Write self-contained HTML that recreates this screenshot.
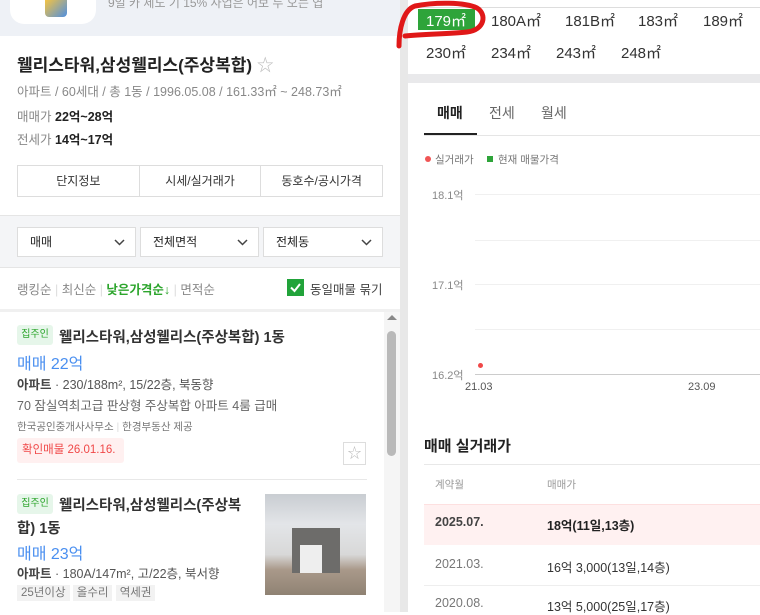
<!DOCTYPE html>
<html><head><meta charset="utf-8"><style>
*{margin:0;padding:0;box-sizing:border-box}
body{width:760px;height:612px;overflow:hidden;background:#fff;font-family:"Liberation Sans","Noto Sans CJK KR",sans-serif;color:#222;position:relative}
.a{position:absolute;white-space:nowrap}
.g{color:#888}
.sel svg{position:absolute;right:10px;top:11px}
</style></head><body>
<div class="a" style="left:0;top:0;width:400px;height:36px;background:#eef1f6"></div>
<div class="a" style="left:10px;top:0;width:86px;height:24px;background:#fff;border-radius:0 0 14px 14px"></div>
<div class="a" style="left:45px;top:0;width:22px;height:17px;background:linear-gradient(135deg,#f4c343,#4f8fe0);border-radius:0 0 4px 4px"></div>
<div class="a" style="left:108px;top:-6px;font-size:12px;color:#999">9일 카 제도 기 15% 사업은 어보 두 오는 엽</div>
<div class="a" style="left:17px;top:51px;font-size:17px;font-weight:bold;color:#222">웰리스타워,삼성웰리스(주상복합) <span style="color:#bbb;font-weight:normal">☆</span></div>
<div class="a g" style="left:17px;top:81px;font-size:12.5px">아파트 / 60세대 / 총 1동 / 1996.05.08 / 161.33㎡ ~ 248.73㎡</div>
<div class="a" style="left:17px;top:106px;font-size:12.5px"><span class="g">매매가</span> <b>22억~28억</b></div>
<div class="a" style="left:17px;top:129px;font-size:12.5px"><span class="g">전세가</span> <b>14억~17억</b></div>
<div class="a" style="left:17px;top:165px;width:366px;height:32px;border:1px solid #ddd;display:flex;font-size:12px;color:#333">
<div style="flex:1;text-align:center;line-height:30px;border-right:1px solid #ddd">단지정보</div>
<div style="flex:1;text-align:center;line-height:30px;border-right:1px solid #ddd">시세/실거래가</div>
<div style="flex:1;text-align:center;line-height:30px">동호수/공시가격</div></div>
<div class="a" style="left:0;top:215px;width:400px;height:53px;background:#f4f5f7;border-top:1px solid #e5e5e5;border-bottom:1px solid #e5e5e5"></div>
<div class="a sel" style="left:17px;top:227px;width:119px;height:30px;background:#fff;border:1px solid #ddd;font-size:12px;line-height:28px;padding-left:12px">매매<svg width="11" height="7"><path d="M1 1L5.5 5.5L10 1" fill="none" stroke="#444" stroke-width="1.5"/></svg></div>
<div class="a sel" style="left:140px;top:227px;width:119px;height:30px;background:#fff;border:1px solid #ddd;font-size:12px;line-height:28px;padding-left:12px">전체면적<svg width="11" height="7"><path d="M1 1L5.5 5.5L10 1" fill="none" stroke="#444" stroke-width="1.5"/></svg></div>
<div class="a sel" style="left:263px;top:227px;width:120px;height:30px;background:#fff;border:1px solid #ddd;font-size:12px;line-height:28px;padding-left:12px">전체동<svg width="11" height="7"><path d="M1 1L5.5 5.5L10 1" fill="none" stroke="#444" stroke-width="1.5"/></svg></div>
<div class="a" style="left:17px;top:279px;font-size:12.5px;color:#888">랭킹순 <span style="color:#ddd">|</span> 최신순 <span style="color:#ddd">|</span> <span style="color:#2ca52c;font-weight:bold">낮은가격순↓</span> <span style="color:#ddd">|</span> 면적순</div>
<div class="a" style="left:287px;top:279px;width:17px;height:17px;background:#21a33a"><svg width="17" height="17" style="position:absolute;left:0;top:0"><path d="M4 8.5L7.5 12L13 5" fill="none" stroke="#fff" stroke-width="2"/></svg></div>
<div class="a" style="left:310px;top:279px;font-size:12.5px;color:#444">동일매물 묶기</div>
<div class="a" style="left:0;top:309px;width:400px;height:3px;background:#f0f0f0"></div>
<div class="a" style="left:17px;top:325px;width:36px;height:20px;background:#e6f6ea;color:#2ca52c;font-size:10px;line-height:20px;text-align:center;border-radius:3px">집주인</div>
<div class="a" style="left:59px;top:326px;font-size:14.5px;font-weight:bold;color:#333">웰리스타워,삼성웰리스(주상복합) 1동</div>
<div class="a" style="left:17px;top:350px;font-size:16px;color:#4a8ff0">매매 22억</div>
<div class="a" style="left:17px;top:374px;font-size:12.5px;color:#555"><b style="color:#444">아파트</b> · 230/188m², 15/22층, 북동향</div>
<div class="a" style="left:17px;top:395px;font-size:12.5px;color:#666">70 잠실역최고급 판상형 주상복합 아파트 4룸 급매</div>
<div class="a" style="left:17px;top:419px;font-size:10.5px;color:#777">한국공인중개사사무소 <span style="color:#ddd">|</span> 한경부동산 제공</div>
<div class="a" style="left:17px;top:438px;width:107px;height:25px;background:#fff0f0;color:#f04848;font-size:11.5px;line-height:25px;padding-left:5px;border-radius:3px">확인매물 26.01.16.</div>
<div class="a" style="left:343px;top:442px;width:23px;height:23px;border:1px solid #ddd;color:#bbb;font-size:14px;text-align:center;line-height:21px">☆</div>
<div class="a" style="left:17px;top:479px;width:350px;height:1px;background:#e8e8e8"></div>
<div class="a" style="left:17px;top:494px;width:36px;height:20px;background:#e6f6ea;color:#2ca52c;font-size:10px;line-height:20px;text-align:center;border-radius:3px">집주인</div>
<div class="a" style="left:59px;top:494px;font-size:14.5px;font-weight:bold;color:#333">웰리스타워,삼성웰리스(주상복</div>
<div class="a" style="left:17px;top:517px;font-size:14.5px;font-weight:bold;color:#333">합) 1동</div>
<div class="a" style="left:17px;top:540px;font-size:16px;color:#4a8ff0">매매 23억</div>
<div class="a" style="left:17px;top:563px;font-size:12.5px;color:#555"><b style="color:#444">아파트</b> · 180A/147m², 고/22층, 북서향</div>
<div class="a" style="left:17px;top:584px;font-size:11.5px;color:#777"><span style="background:#f2f2f2;padding:2px 4px">25년이상</span> <span style="background:#f2f2f2;padding:2px 4px">올수리</span> <span style="background:#f2f2f2;padding:2px 4px">역세권</span></div>
<div class="a" style="left:265px;top:494px;width:101px;height:101px;background:linear-gradient(180deg,#c9cdd2 0%,#e3e5e8 30%,#d8d8d8 60%,#a9998a 75%,#8f8273 100%)"></div>
<div class="a" style="left:292px;top:528px;width:48px;height:45px;background:#6d6c6a"></div>
<div class="a" style="left:300px;top:545px;width:22px;height:28px;background:#eee"></div>
<div class="a" style="left:384px;top:312px;width:16px;height:300px;background:#f5f5f5"></div>
<div class="a" style="left:387px;top:331px;width:9px;height:125px;background:#b9b9b9;border-radius:5px"></div>
<div class="a" style="left:387px;top:315px;width:0;height:0;border-left:5px solid transparent;border-right:5px solid transparent;border-bottom:5px solid #888"></div>
<div class="a" style="left:400px;top:0;width:8px;height:612px;background:#e8e8e8"></div>
<div class="a" style="left:408px;top:7px;width:352px;height:1px;background:#ddd"></div>
<div class="a" style="left:418px;top:9px;width:57px;height:21px;background:#2ea43a"></div>
<div class="a" style="left:426px;top:10px;font-size:15px;color:#fff">179㎡</div>
<div class="a" style="left:491px;top:10px;font-size:15px;color:#333">180A㎡</div>
<div class="a" style="left:565px;top:10px;font-size:15px;color:#333">181B㎡</div>
<div class="a" style="left:638px;top:10px;font-size:15px;color:#333">183㎡</div>
<div class="a" style="left:703px;top:10px;font-size:15px;color:#333">189㎡</div>
<div class="a" style="left:426px;top:42px;font-size:15px;color:#333">230㎡</div>
<div class="a" style="left:491px;top:42px;font-size:15px;color:#333">234㎡</div>
<div class="a" style="left:556px;top:42px;font-size:15px;color:#333">243㎡</div>
<div class="a" style="left:621px;top:42px;font-size:15px;color:#333">248㎡</div>
<div class="a" style="left:408px;top:74px;width:352px;height:9px;background:#e9e9eb"></div>
<div class="a" style="left:437px;top:103px;font-size:14px;font-weight:bold;color:#222">매매</div>
<div class="a" style="left:489px;top:103px;font-size:14px;color:#666">전세</div>
<div class="a" style="left:541px;top:103px;font-size:14px;color:#666">월세</div>
<div class="a" style="left:424px;top:135px;width:336px;height:1px;background:#e5e5e5"></div>
<div class="a" style="left:424px;top:133px;width:53px;height:2px;background:#222"></div>
<div class="a" style="left:425px;top:156px;width:6px;height:6px;border-radius:50%;background:#f05555"></div>
<div class="a" style="left:435px;top:152px;font-size:10.5px;color:#777">실거래가</div>
<div class="a" style="left:487px;top:156px;width:6px;height:6px;background:#2ea43a"></div>
<div class="a" style="left:498px;top:152px;font-size:10.5px;color:#777">현재 매물가격</div>
<div class="a" style="left:432px;top:187px;font-size:11px;color:#888">18.1억</div>
<div class="a" style="left:432px;top:277px;font-size:11px;color:#888">17.1억</div>
<div class="a" style="left:432px;top:367px;font-size:11px;color:#888">16.2억</div>
<div class="a" style="left:475px;top:194px;width:285px;height:1px;background:#f0f0f0"></div>
<div class="a" style="left:475px;top:240px;width:285px;height:1px;background:#f0f0f0"></div>
<div class="a" style="left:475px;top:284px;width:285px;height:1px;background:#f0f0f0"></div>
<div class="a" style="left:475px;top:329px;width:285px;height:1px;background:#f0f0f0"></div>
<div class="a" style="left:475px;top:374px;width:285px;height:1px;background:#ccc"></div>
<div class="a" style="left:478px;top:363px;width:5px;height:5px;border-radius:50%;background:#f04848"></div>
<div class="a" style="left:465px;top:381px;font-size:11px;color:#555">21.03</div>
<div class="a" style="left:688px;top:381px;font-size:11px;color:#555">23.09</div>
<div class="a" style="left:424px;top:435px;font-size:15px;font-weight:bold;color:#222">매매 실거래가</div>
<div class="a" style="left:424px;top:464px;width:336px;height:1px;background:#e8e8e8"></div>
<div class="a" style="left:435px;top:477px;font-size:10.5px;color:#999">계약월</div>
<div class="a" style="left:547px;top:477px;font-size:10.5px;color:#999">매매가</div>
<div class="a" style="left:424px;top:504px;width:336px;height:41px;background:#fff1f1;border-top:1px solid #fde0e0"></div>
<div class="a" style="left:435px;top:515px;font-size:12.5px;font-weight:bold;color:#444">2025.07.</div>
<div class="a" style="left:547px;top:515px;font-size:12.5px;font-weight:bold;color:#222">18억(11일,13층)</div>
<div class="a" style="left:435px;top:557px;font-size:12.5px;color:#777">2021.03.</div>
<div class="a" style="left:547px;top:557px;font-size:12.5px;color:#333">16억 3,000(13일,14층)</div>
<div class="a" style="left:424px;top:585px;width:336px;height:1px;background:#eee"></div>
<div class="a" style="left:435px;top:596px;font-size:12.5px;color:#777">2020.08.</div>
<div class="a" style="left:547px;top:596px;font-size:12.5px;color:#333">13억 5,000(25일,17층)</div>
<svg class="a" style="left:395px;top:0" width="100" height="50"><path d="M4 46 C4 30 8 10 20 6 C40 2 70 2 82 8 C92 14 90 30 72 32 C55 34 30 34 10 36" fill="none" stroke="#e01818" stroke-width="5" stroke-linecap="round"/></svg>
</body></html>
